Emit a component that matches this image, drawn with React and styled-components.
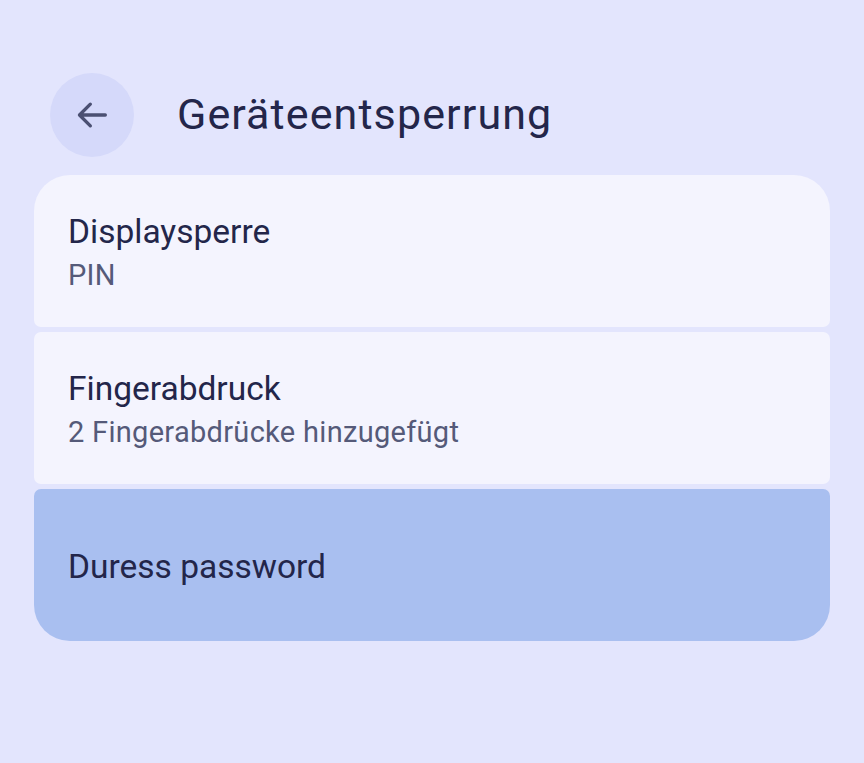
import React from 'react'
import styled, { createGlobalStyle } from 'styled-components'

const GlobalStyle = createGlobalStyle`
	html, body {
		margin: 0;
		padding: 0;
		background: #e3e5fd;
		font-family: Roboto, 'Noto Sans', sans-serif;
	}
`

const items = [
	{ title: 'Displaysperre', summary: 'PIN' },
	{ title: 'Fingerabdruck', summary: '2 Fingerabdrücke hinzugefügt' },
	{ title: 'Duress password', highlighted: true },
]

function App() {
	return (
		<>
			<GlobalStyle />
			<Page>
				<Header>
					<BackButton aria-label="Zurück">
						<svg width="40" height="40" viewBox="0 0 24 24">
							<path
								d="M20 12H4.5M11 5.5L4.5 12L11 18.5"
								fill="none"
								stroke="#4b5072"
								strokeWidth="2"
								strokeLinecap="round"
								strokeLinejoin="round"
							/>
						</svg>
					</BackButton>
					<Title>Geräteentsperrung</Title>
				</Header>
				<List>
					{items.map((item, i) => (
						<Row
							key={item.title}
							$first={i === 0}
							$last={i === items.length - 1}
							$highlighted={item.highlighted}
						>
							<RowTitle>{item.title}</RowTitle>
							{item.summary && <RowSummary>{item.summary}</RowSummary>}
						</Row>
					))}
				</List>
			</Page>
		</>
	)
}

const Page = styled.div`
	padding: 73px 34px 0 34px;
	min-height: 763px;
	box-sizing: border-box;
`

const Header = styled.div`
	display: flex;
	align-items: center;
	gap: 43px;
	padding-left: 16px;
	height: 84px;
	margin-bottom: 18px;
`

const BackButton = styled.div`
	width: 84px;
	height: 84px;
	border-radius: 50%;
	background: #d5d9fa;
	display: flex;
	align-items: center;
	justify-content: center;
	flex-shrink: 0;
`

const Title = styled.h1`
	margin: 0 0 3px 0;
	font-size: 43px;
	font-weight: 400;
	color: #23264a;
	letter-spacing: 1.1px;
`

const List = styled.div`
	display: flex;
	flex-direction: column;
	gap: 5px;
`

const Row = styled.div`
	height: 152px;
	box-sizing: border-box;
	padding: 4px 34px 0 34px;
	display: flex;
	flex-direction: column;
	justify-content: center;
	background: ${props => (props.$highlighted ? '#a9bff0' : '#f4f4fe')};
	border-radius: ${props => (props.$first ? '36px' : '7px')}
		${props => (props.$first ? '36px' : '7px')}
		${props => (props.$last ? '36px' : '7px')}
		${props => (props.$last ? '36px' : '7px')};
`

const RowTitle = styled.div`
	font-size: 33.5px;
	line-height: 40px;
	color: #23264a;
`

const RowSummary = styled.div`
	margin-top: 3px;
	font-size: 29px;
	line-height: 40px;
	letter-spacing: 0.3px;
	color: #555a79;
`

export default App
